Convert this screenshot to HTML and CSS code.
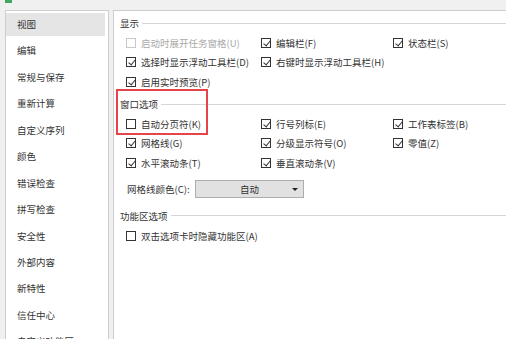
FILE: index.html
```html
<!DOCTYPE html>
<html lang="zh-CN">
<head>
  <meta charset="UTF-8">
  <title>选项</title>
  <link rel="stylesheet" href="styles.css">
</head>
<body>
  <div class="titlebar"><span class="app-icon"></span></div>
  <div class="window">
    <!-- 左侧导航 -->
    <ul class="nav">
      <li class="nav-item active">视图</li>
      <li class="nav-item">编辑</li>
      <li class="nav-item">常规与保存</li>
      <li class="nav-item">重新计算</li>
      <li class="nav-item">自定义序列</li>
      <li class="nav-item">颜色</li>
      <li class="nav-item">错误检查</li>
      <li class="nav-item">拼写检查</li>
      <li class="nav-item">安全性</li>
      <li class="nav-item">外部内容</li>
      <li class="nav-item">新特性</li>
      <li class="nav-item">信任中心</li>
      <li class="nav-item">自定义功能区</li>
    </ul>

    <!-- 右侧设置面板 -->
    <div class="panel">
      <div class="group-title">显示</div>
      <div class="grid">
        <label class="check disabled"><span class="box"></span>启动时展开任务窗格(U)</label>
        <label class="check"><span class="box on"></span>编辑栏(F)</label>
        <label class="check"><span class="box on"></span>状态栏(S)</label>
        <label class="check"><span class="box on"></span>选择时显示浮动工具栏(D)</label>
        <label class="check span2"><span class="box on"></span>右键时显示浮动工具栏(H)</label>
        <label class="check"><span class="box on"></span>启用实时预览(P)</label>
      </div>

      <div class="group-title second">窗口选项</div>
      <div class="grid">
        <label class="check"><span class="box"></span>自动分页符(K)</label>
        <label class="check"><span class="box on"></span>行号列标(E)</label>
        <label class="check"><span class="box on"></span>工作表标签(B)</label>
        <label class="check"><span class="box on"></span>网格线(G)</label>
        <label class="check"><span class="box on"></span>分级显示符号(O)</label>
        <label class="check"><span class="box on"></span>零值(Z)</label>
        <label class="check"><span class="box on"></span>水平滚动条(T)</label>
        <label class="check"><span class="box on"></span>垂直滚动条(V)</label>
      </div>
      <div class="color-row">
        <span class="color-label">网格线颜色(C):</span>
        <div class="select">
          <span>自动</span>
          <span class="arrow"></span>
        </div>
      </div>

      <div class="group-title third">功能区选项</div>
      <div class="grid last">
        <label class="check span3"><span class="box"></span>双击选项卡时隐藏功能区(A)</label>
      </div>

      <div class="highlight"></div>
    </div>
  </div>
</body>
</html>
```

FILE: styles.css
```css
* { box-sizing: border-box; margin: 0; padding: 0; }

body {
  background: #f0f0f0;
  font-family: "Noto Sans CJK SC", "Microsoft YaHei", sans-serif;
  font-size: 9.5px;
  color: #333;
  height: 339px;
  overflow: hidden;
}

/* 顶部标题栏残留 */
.titlebar {
  height: 10px;
  padding-left: 5px;
}

.app-icon {
  display: block;
  width: 7px;
  height: 3px;
  background: #3fa85b;
}

.window {
  display: flex;
  gap: 4px;
  padding-left: 5px;
}

/* 左侧导航 */
.nav {
  list-style: none;
  width: 104px;
  height: 340px;
  background: #fff;
  border: 1px solid #cdcdcd;
  border-bottom: none;
  padding: 2px 3px 0 0;
  display: flex;
  flex-direction: column;
  gap: 3.45px;
  flex-shrink: 0;
}

.nav-item {
  height: 23px;
  line-height: 23px;
  padding-left: 11px;
  white-space: nowrap;
}

.nav-item.active {
  background: #e5e5e5;
}

/* 右侧面板 */
.panel {
  flex: 1;
  position: relative;
  height: 340px;
  background: #fff;
  border: 1px solid #cdcdcd;
  border-right: none;
  border-bottom: none;
  padding: 2px 0 0 6px;
}

.group-title {
  display: flex;
  align-items: center;
  gap: 3px;
  height: 20px;
  white-space: nowrap;
}

.group-title::after {
  content: "";
  flex: 1;
  height: 1px;
  background: #d6d6d6;
}

.group-title.second { margin-top: 2.5px; }
.group-title.third { margin-top: 7.5px; }

.grid {
  display: grid;
  grid-template-columns: 135px 132px auto;
  grid-auto-rows: 19.5px;
  padding-left: 6px;
}

.grid.last { margin-top: 1px; }

.span2 { grid-column: span 2; }
.span3 { grid-column: span 3; }

.check {
  display: flex;
  align-items: center;
  gap: 5px;
  white-space: nowrap;
}

.box {
  width: 10px;
  height: 10px;
  border: 1px solid #333;
  background: #fff;
  flex-shrink: 0;
  position: relative;
}

.box.on::after {
  content: "";
  position: absolute;
  left: 2.5px;
  top: 0px;
  width: 3px;
  height: 6px;
  border-right: 1.2px solid #333;
  border-bottom: 1.2px solid #333;
  transform: rotate(40deg);
}

.check.disabled { color: #a8a8a8; }
.check.disabled .box { border-color: #c8c8c8; }

/* 网格线颜色 */
.color-row {
  display: flex;
  align-items: center;
  margin-top: 7.5px;
  padding-left: 7px;
}

.color-label {
  width: 68px;
  white-space: nowrap;
}

.select {
  width: 109px;
  height: 18px;
  background: #e1e1e1;
  border: 1px solid #adadad;
  display: flex;
  align-items: center;
  justify-content: center;
  position: relative;
}

.select .arrow {
  position: absolute;
  right: 5px;
  top: 7px;
  border-left: 3px solid transparent;
  border-right: 3px solid transparent;
  border-top: 3px solid #222;
}

/* 红色标注框 */
.highlight {
  position: absolute;
  left: 2px;
  top: 78px;
  width: 92px;
  height: 46px;
  border: 2px solid #e5444a;
}
```
